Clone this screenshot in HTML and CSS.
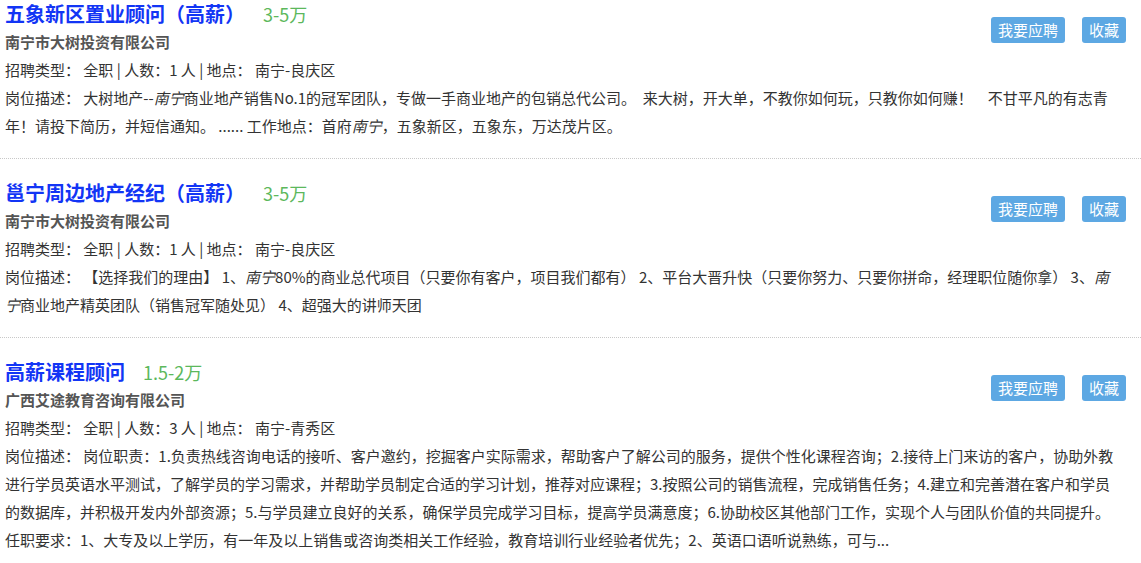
FILE: index.html
```html
<!DOCTYPE html>
<html lang="zh-CN">
<head>
  <meta charset="UTF-8">
  <title>职位列表</title>
  <link rel="stylesheet" href="styles.css">
</head>
<body>
  <!-- Job list -->
  <ul class="job-list">
    <li class="job">
      <div class="job-actions">
        <a class="btn" href="#">我要应聘</a>
        <a class="btn" href="#">收藏</a>
      </div>
      <h3 class="job-title"><a href="#">五象新区置业顾问（高薪）</a><span class="salary">3-5万</span></h3>
      <p class="company">南宁市大树投资有限公司</p>
      <p class="meta">招聘类型： 全职 | 人数：1 人 | 地点： 南宁-良庆区</p>
      <p class="desc">岗位描述： 大树地产--<em>南宁</em>商业地产销售No.1的冠军团队，专做一手商业地产的包销总代公司。&nbsp; 来大树，开大单，不教你如何玩，只教你如何赚！　不甘平凡的有志青年！请投下简历，并短信通知。 ...... 工作地点：首府<em>南宁</em>，五象新区，五象东，万达茂片区。</p>
    </li>
    <li class="job">
      <div class="job-actions">
        <a class="btn" href="#">我要应聘</a>
        <a class="btn" href="#">收藏</a>
      </div>
      <h3 class="job-title"><a href="#">邕宁周边地产经纪（高薪）</a><span class="salary">3-5万</span></h3>
      <p class="company">南宁市大树投资有限公司</p>
      <p class="meta">招聘类型： 全职 | 人数：1 人 | 地点： 南宁-良庆区</p>
      <p class="desc">岗位描述： 【选择我们的理由】 1、<em>南宁</em>80%的商业总代项目（只要你有客户，项目我们都有） 2、平台大晋升快（只要你努力、只要你拼命，经理职位随你拿） 3、<em>南宁</em>商业地产精英团队（销售冠军随处见） 4、超强大的讲师天团</p>
    </li>
    <li class="job">
      <div class="job-actions">
        <a class="btn" href="#">我要应聘</a>
        <a class="btn" href="#">收藏</a>
      </div>
      <h3 class="job-title"><a href="#">高薪课程顾问</a><span class="salary">1.5-2万</span></h3>
      <p class="company">广西艾途教育咨询有限公司</p>
      <p class="meta">招聘类型： 全职 | 人数：3 人 | 地点： 南宁-青秀区</p>
      <p class="desc">岗位描述： 岗位职责：1.负责热线咨询电话的接听、客户邀约，挖掘客户实际需求，帮助客户了解公司的服务，提供个性化课程咨询；2.接待上门来访的客户，协助外教进行学员英语水平测试，了解学员的学习需求，并帮助学员制定合适的学习计划，推荐对应课程；3.按照公司的销售流程，完成销售任务；4.建立和完善潜在客户和学员的数据库，并积极开发内外部资源；5.与学员建立良好的关系，确保学员完成学习目标，提高学员满意度；6.协助校区其他部门工作，实现个人与团队价值的共同提升。 任职要求：1、大专及以上学历，有一年及以上销售或咨询类相关工作经验，教育培训行业经验者优先；2、英语口语听说熟练，可与...</p>
    </li>
  </ul>
</body>
</html>
```

FILE: styles.css
```css
/* Colors */
:root {
  --title-color: #1235f5;
  --salary-color: #5cb85c;
  --text-color: #333;
  --company-color: #555;
  --btn-bg: #5da8e3;
  --line-color: #c8c8c8;
}

body {
  margin: 0;
  background: #fff;
  color: var(--text-color);
  font-family: "Noto Sans CJK SC", "Noto Sans", sans-serif;
  font-size: 15px;
}

.job-list {
  list-style: none;
  margin: 0;
  padding: 0;
}

.job {
  padding: 20px 21px 18px 5px;
  border-bottom: 1px dotted var(--line-color);
}

.job:first-child {
  padding-top: 0;
}

/* Title row */
.job-title {
  margin: 0;
  line-height: 28px;
  font-size: 20px;
  font-weight: bold;
}

.job-title a {
  color: var(--title-color);
  text-decoration: none;
}

.salary {
  margin-left: 18px;
  font-size: 18px;
  font-weight: normal;
  color: var(--salary-color);
}

.company,
.meta,
.desc {
  margin: 0;
  line-height: 28px;
}

.company {
  font-weight: bold;
  color: var(--company-color);
}

.desc em {
  font-style: italic;
}

/* Right-side buttons */
.job-actions {
  float: right;
  display: flex;
  gap: 17px;
  margin-top: 17px;
  margin-right: -6px;
}

.btn {
  display: block;
  padding: 0 7px;
  height: 26px;
  line-height: 26px;
  background: var(--btn-bg);
  color: #fff;
  font-size: 15px;
  text-decoration: none;
  border-radius: 3px;
}
```
